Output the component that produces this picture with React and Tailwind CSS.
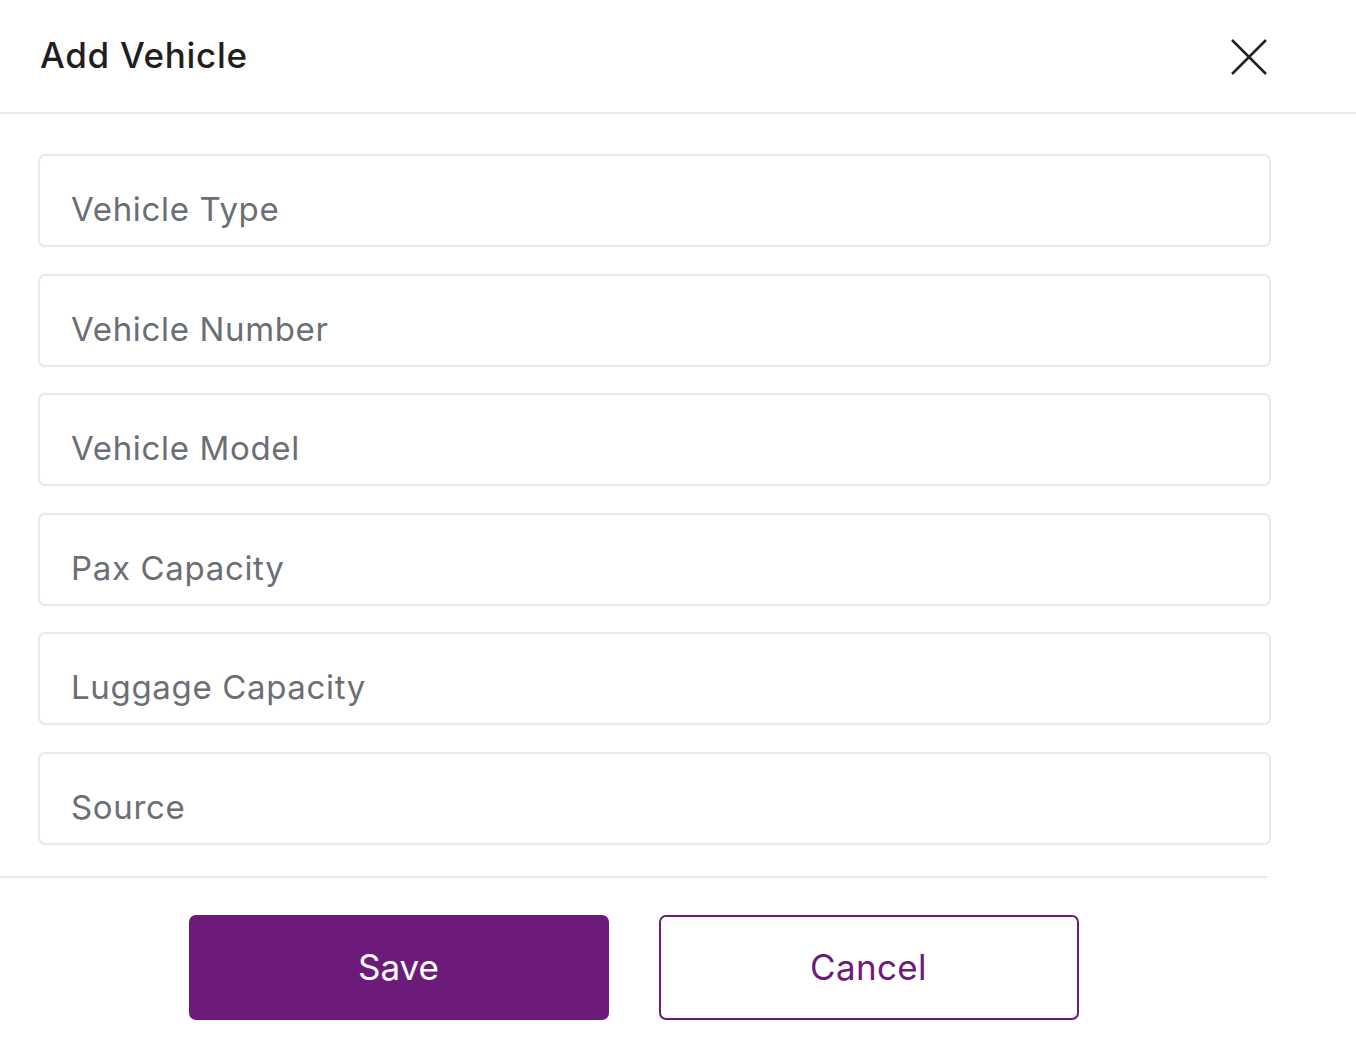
import React from "react";

const fields = [
  "Vehicle Type",
  "Vehicle Number",
  "Vehicle Model",
  "Pax Capacity",
  "Luggage Capacity",
  "Source",
];

export default function App() {
  return (
    <div
      className="w-[1356px] h-[1056px] bg-white overflow-hidden"
      style={{ fontFamily: "Inter, 'Noto Sans', sans-serif" }}
    >
      <div className="h-[114px] flex items-center justify-between pl-[40px] pr-[88px] border-b-2 border-[#e8e9eb]">
        <h1 className="text-[35px] font-medium tracking-[0.02em] text-[#1f1f1f] leading-none pb-[2px]">
          Add Vehicle
        </h1>
        <button className="w-[38px] h-[38px] flex items-center justify-center mt-[2px]">
          <svg width="36" height="36" viewBox="0 0 36 36" fill="none">
            <path d="M1 1L35 35M35 1L1 35" stroke="#222" strokeWidth="2.5" />
          </svg>
        </button>
      </div>
      <div className="w-[1267px]">
        <div className="pt-[40px] pl-[38px] flex flex-col gap-[26.6px] pb-[31px]">
          {fields.map((f) => (
            <div
              key={f}
              className="w-[1233px] h-[93px] border-2 border-[#e8e9eb] rounded-[7px] flex items-center pl-[31px] pt-[18px]"
            >
              <span className="text-[33px] tracking-[0.02em] text-[#6b6e75] leading-none">
                {f}
              </span>
            </div>
          ))}
        </div>
        <div className="border-t-2 border-[#e8e9eb] pt-[37px] flex justify-center gap-[50px]">
          <button className="w-[420px] h-[105px] rounded-[7px] bg-[#6d1b7b] text-white text-[35px] leading-none">
            Save
          </button>
          <button className="w-[420px] h-[105px] rounded-[7px] border-[2.5px] border-[#6d1b7b] text-[#6d1b7b] text-[35px] tracking-[0.01em] leading-none">
            Cancel
          </button>
        </div>
      </div>
    </div>
  );
}
